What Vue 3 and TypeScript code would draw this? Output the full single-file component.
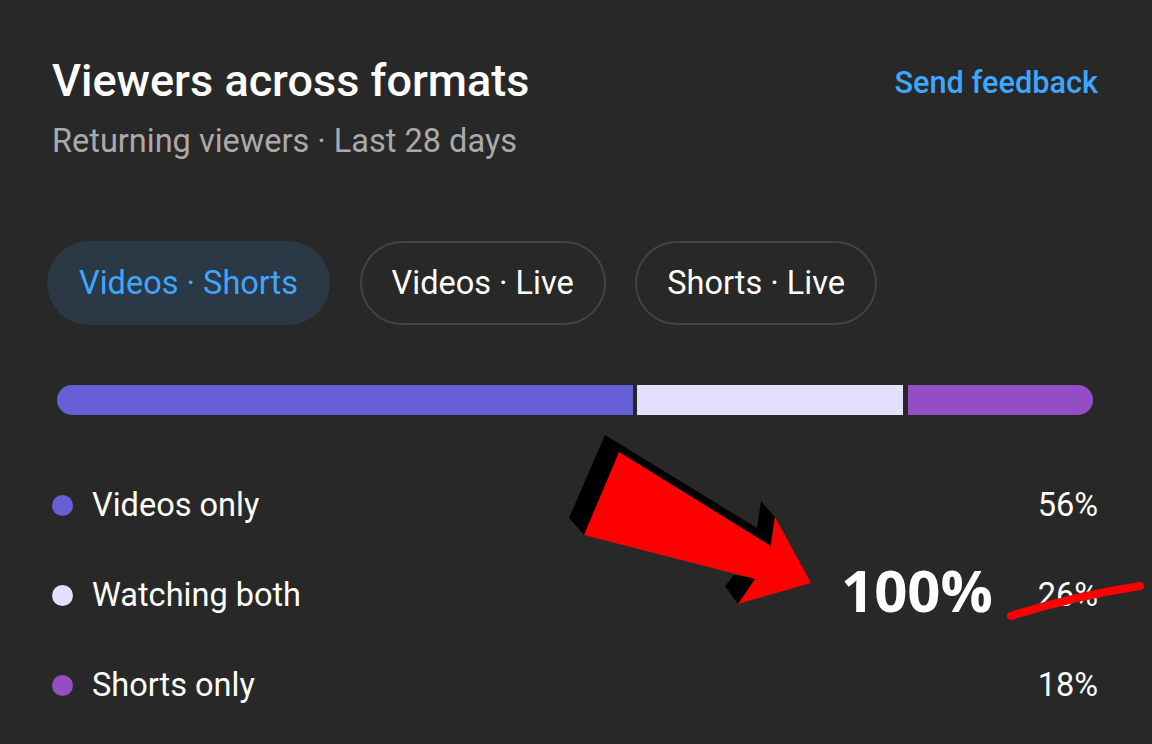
<script setup lang="ts">
interface Row {
  label: string
  value: string
  color: string
}

const chips = ['Videos · Shorts', 'Videos · Live', 'Shorts · Live']

const rows: Row[] = [
  { label: 'Videos only', value: '56%', color: '#6560d6' },
  { label: 'Watching both', value: '26%', color: '#e2e0fd' },
  { label: 'Shorts only', value: '18%', color: '#944dc4' }
]
</script>

<template>
  <div class="card">
    <header class="head">
      <div>
        <h1>Viewers across formats</h1>
        <p class="sub">Returning viewers · Last 28 days</p>
      </div>
      <a class="feedback">Send feedback</a>
    </header>

    <div class="chips">
      <button v-for="(chip, i) in chips" :key="chip" class="chip" :class="{ active: i === 0 }">{{ chip }}</button>
    </div>

    <div class="bar">
      <span class="seg one"></span>
      <span class="seg two"></span>
      <span class="seg three"></span>
    </div>

    <ul class="legend">
      <li v-for="row in rows" :key="row.label">
        <span class="dot" :style="{ background: row.color }"></span>
        <span class="label">{{ row.label }}</span>
        <span class="value">{{ row.value }}</span>
      </li>
    </ul>

    <svg class="markup" width="1152" height="744" viewBox="0 0 1152 744">
      <polygon fill="#000" points="605,435 757,528 761,501 775,517 770,546 584,535 569,518" />
      <polygon fill="#000" points="725,586 734,575 760,578 738,604" />
      <polygon fill="#f00" points="619,452 771,546 775,517 811,583 738,604 755,579 584,535" />
      <path d="M1011 616 Q1070 597 1140 586" fill="none" stroke="#f00" stroke-width="8" stroke-linecap="round" />
    </svg>
    <span class="big">100%</span>
  </div>
</template>

<style scoped>
.card {
  position: relative;
  width: 1152px;
  height: 744px;
  box-sizing: border-box;
  padding: 50px 54px 0 52px;
  overflow: hidden;
  background: #282828;
  color: #fff;
  font-family: Roboto, "Liberation Sans", sans-serif;
}

.head {
  display: flex;
  justify-content: space-between;
  align-items: flex-start;
}

h1 {
  margin: 0;
  font-size: 45px;
  line-height: 62px;
  font-weight: 500;
}

.sub {
  margin: 0;
  font-size: 32.5px;
  line-height: 58px;
  color: #aaa;
}

.feedback {
  margin-top: 10px;
  font-size: 30.7px;
  line-height: 46px;
  font-weight: 500;
  color: #3ea6ff;
}

.chips {
  display: flex;
  gap: 29.5px;
  margin: 71px 0 0 -5px;
}

.chip {
  height: 84px;
  box-sizing: border-box;
  padding: 0 30px;
  border: 2px solid #434343;
  border-radius: 42px;
  background: transparent;
  color: #fff;
  font: 400 32.5px Roboto, "Liberation Sans", sans-serif;
}

.chip.active {
  border-color: transparent;
  background: #2a3945;
  color: #3ea6ff;
}

.bar {
  display: flex;
  gap: 4px;
  height: 30px;
  margin: 60px 5px 0;
}

.seg {
  display: block;
}

.one {
  width: 576px;
  border-radius: 15px 0 0 15px;
  background: #6560d6;
}

.two {
  width: 266px;
  background: #e2e0fd;
}

.three {
  flex: 1;
  margin-left: 1px;
  border-radius: 0 15px 15px 0;
  background: #944dc4;
}

.legend {
  margin: 45px 0 0;
  padding: 0;
  list-style: none;
}

.legend li {
  display: flex;
  align-items: center;
  height: 90px;
  font-size: 32.5px;
}

.dot {
  width: 21px;
  height: 21px;
  margin-right: 19px;
  border-radius: 50%;
}

.value {
  margin-left: auto;
}

.markup {
  position: absolute;
  top: 0;
  left: 0;
}

.big {
  position: absolute;
  left: 841px;
  top: 551px;
  font: 700 58px/78px "Open Sans", sans-serif;
  color: #fff;
}
</style>
